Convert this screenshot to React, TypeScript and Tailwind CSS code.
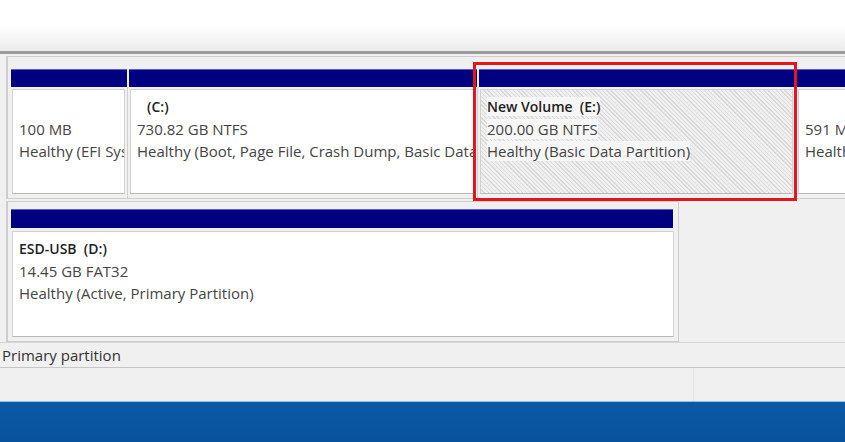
import React from "react";

type Part = {
  width: string;
  label?: string;
  size: string;
  status: string;
  hatched?: boolean;
  selected?: boolean;
};

const disk0: Part[] = [
  { width: "w-[118px]", size: "100 MB", status: "Healthy (EFI System Partition)" },
  { width: "w-[350px]", label: "(C:)", size: "730.82 GB NTFS", status: "Healthy (Boot, Page File, Crash Dump, Basic Data Partition)" },
  { width: "w-[318px]", label: "New Volume  (E:)", size: "200.00 GB NTFS", status: "Healthy (Basic Data Partition)", hatched: true, selected: true },
  { width: "w-[120px]", size: "591 MB", status: "Healthy (Recovery Partition)" },
];

function Partition({ p }: { p: Part }) {
  return (
    <div className={`${p.width} shrink-0 relative flex flex-col`}>
      <div className="h-[18px] bg-[#000080] border-t border-[#5a5ad8] mx-[1px]" />
      <div className="flex-1 flex pt-[2px] pb-[4px] px-[2px] border-r border-[#cfcfcf]">
        <div
          className={`flex-1 min-w-0 overflow-hidden border border-[#d2d2d2] border-b-[#b8b8b8] pl-[6px] pt-[6px] leading-[22px] whitespace-nowrap ${
            p.hatched
              ? "bg-[repeating-linear-gradient(45deg,#efefef_0px,#efefef_2px,#dadada_2px,#dadada_3px)]"
              : "bg-white"
          }`}
        >
          <div className="h-[22px] text-[14px] font-semibold text-[#1e1e1e]">
            {p.label && (
              <span className={`${p.label === "(C:)" ? "ml-[10px]" : ""} ${p.hatched ? "bg-[#f6f6f6]" : ""} whitespace-pre`}>
                {p.label}
              </span>
            )}
          </div>
          <div className="text-[#444]">
            <span className={p.hatched ? "bg-[#f6f6f6]" : ""}>{p.size}</span>
          </div>
          <div className="text-[#444]">
            <span className={p.hatched ? "bg-[#f6f6f6]" : ""}>{p.status}</span>
          </div>
        </div>
      </div>
      {p.selected && (
        <div className="absolute left-[-5px] right-[-1px] top-[-7px] bottom-[-3px] border-[3px] border-[#e3161b] pointer-events-none" />
      )}
    </div>
  );
}

export default function App() {
  return (
    <div
      className="w-[845px] h-[442px] overflow-hidden flex flex-col bg-[#f0f0f0] text-[15px]"
      style={{ fontFamily: "'Open Sans', 'Noto Sans', sans-serif" }}
    >
      <div className="h-[51px] shrink-0 bg-gradient-to-b from-white via-white to-[#ebebeb]" />
      <div className="h-[3px] shrink-0 bg-[#9c9c9c]" />

      <div className="shrink-0 pt-[2px]">
        {/* Disk 0 */}
        <div className="ml-[6px] h-[143px] border-l-2 border-t border-b border-[#cdcdcd] pt-[12px] pl-[2px] flex">
          {disk0.map((p, i) => (
            <Partition key={i} p={p} />
          ))}
        </div>

        {/* Disk 1 */}
        <div className="mt-[2px] ml-[6px] w-[673px] h-[141px] border-l-2 border-t border-b border-r border-[#cdcdcd] pt-[7px] pl-[2px] flex">
          <div className="w-[664px] shrink-0 flex flex-col">
            <div className="h-[19px] bg-[#000080] border-t border-[#5a5ad8] mx-[1px]" />
            <div className="flex-1 flex pt-[3px] pb-[4px] pl-[2px]">
              <div className="flex-1 border border-[#d2d2d2] border-b-[#b8b8b8] bg-white pl-[6px] pt-[6px] leading-[22px] whitespace-nowrap">
                <div className="h-[22px] text-[14px] font-semibold text-[#1e1e1e] whitespace-pre">ESD-USB  (D:)</div>
                <div className="text-[#444]">14.45 GB FAT32</div>
                <div className="text-[#444]">Healthy (Active, Primary Partition)</div>
              </div>
            </div>
          </div>
        </div>
      </div>

      <div className="h-[2px] shrink-0 border-t border-[#d4d4d4]" />

      <div className="h-[24px] shrink-0 flex items-center pl-[2px] text-[#333] border-b border-[#c6c6c6]">
        Primary partition
      </div>

      <div className="h-[33px] shrink-0 flex">
        <div className="w-[694px] border-r border-[#e2e2e2]" />
        <div className="flex-1" />
      </div>

      <div className="h-[1px] shrink-0 bg-[#8fc0e6]" />
      <div className="flex-1 bg-gradient-to-b from-[#0c5aa4] to-[#08529b]" />
    </div>
  );
}
